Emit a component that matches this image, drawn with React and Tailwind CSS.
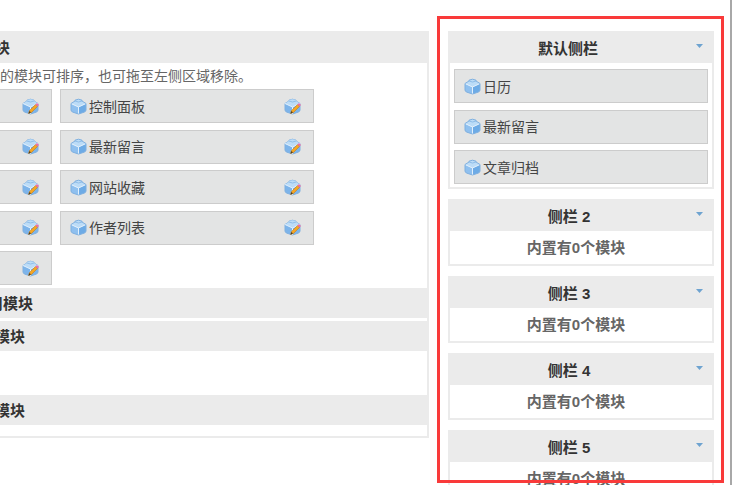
const CubeIcon = () => (
  <svg width="17" height="17" viewBox="0 0 17 17" className="shrink-0">
    <path d="M1 5.500 8.500 9v7L3 14.200Q1 13.500 1 12z" fill="#8fc0ef" />
    <path d="M16 5.500 8.500 9v7l5.500-1.800q2-.7 2-2.200z" fill="#6dabe6" />
    <path d="M1 5.500 5 3V2.200Q8.500.2 12 2.200V3l4 2.500L8.500 9z" fill="#bcdcf7" />
    <path d="M5 3q3.500 2 7 0" fill="none" stroke="#8fbde8" strokeWidth="1" />
    <path d="M1 5.500 8.500 9 16 5.500M8.500 9v7" fill="none" stroke="#e2f0fc" strokeWidth="1" />
    <path d="M1 5.500 5 3V2.200Q8.500.2 12 2.200V3l4 2.500V12q0 1.500-2 2.200L8.500 16 3 14.200Q1 13.500 1 12z" fill="none" stroke="#7fb0e0" strokeWidth="1" />
  </svg>
)

const EditIcon = () => (
  <svg width="18" height="17" viewBox="0 0 18 17" className="shrink-0">
    <path d="M1 5.500 5 3V2.200Q8.500.2 12 2.200V3l4 2.500V12q0 1.500-2 2.200L8.500 16 3 14.200Q1 13.500 1 12z" fill="#7db4ea" stroke="#7fb0e0" strokeWidth="1" />
    <path d="M1 5.500 5 3V2.200Q8.500.2 12 2.200V3l4 2.500L8.500 9z" fill="#bcdcf7" />
    <path d="M5 3q3.500 2 7 0" fill="none" stroke="#8fbde8" strokeWidth="1" />
    <path d="M1 5.500 8.500 9 16 5.500M8.500 9v7" fill="none" stroke="#e2f0fc" strokeWidth="1" />
    <path d="M6.500 15.500 7.500 12.500l6-6 2 2-6 6z" fill="#f5a623" stroke="#b8761a" strokeWidth="0.5" />
    <path d="M13.500 6.500l1.500-1.500 2 2-1.500 1.500z" fill="#ee6fa8" />
    <path d="M6.500 15.500 7.500 13l1.500 1.500z" fill="#4a3a20" />
  </svg>
)

const ModuleItem = ({ name, showEdit }) => (
  <div className="flex h-[34px] items-center border border-[#cccccc] bg-[#e3e4e4] pl-[9px] pr-[11px]">
    <CubeIcon />
    <span className="ml-[2px] flex-1 pt-[2px] text-[14px] text-[#444444]">{name}</span>
    {showEdit && <EditIcon />}
  </div>
)

const LeftHeader = ({ title, className }) => (
  <div className={`flex h-[30px] items-center bg-[#ebebeb] pt-[2px] text-[15px] font-bold text-[#333333] ${className}`}>
    {title}
  </div>
)

const SidebarPanel = ({ title, pad, children }) => (
  <div className="border-x-2 border-b-2 border-[#ebebeb]">
    <div className={`relative -mx-[2px] flex h-[32px] items-center justify-center bg-[#ebebeb] pt-[4px] text-[15px] font-bold text-[#333333] ${pad}`}>
      {title}
      <svg width="7" height="4" viewBox="0 0 7 4" className="absolute right-[11px] top-[13px]">
        <path d="M0 0h7L3.500 4z" fill="#6ea3d0" />
      </svg>
    </div>
    {children}
  </div>
)

const EmptyBody = () => (
  <div className="flex h-[33px] items-center justify-center pr-[10px] pt-[2px] text-[15px] font-bold text-[#666666]">内置有0个模块</div>
)

const gridItems = [
  ['近期文章', '控制面板'],
  ['近期评论', '最新留言'],
  ['标签云', '网站收藏'],
  ['友情链接', '作者列表'],
  ['分类目录'],
]

export default function App() {
  return (
    <div className="relative h-[485px] w-[732px] overflow-hidden bg-white pt-[31px] font-['Liberation_Sans','Noto_Sans_CJK_SC',sans-serif]">
      <div className="flex items-start">
        {/* left area, runs off the screen */}
        <div className="-ml-[208px] w-[637px] shrink-0 border-x-2 border-b-2 border-[#ebebeb] pb-[11px]">
          <div className="-mx-[2px] flex h-[32px] items-center bg-[#ebebeb] pl-[158px] pt-[3px] text-[15px] font-bold text-[#333333]">
            可用模块
          </div>
          <p className="flex h-[26px] items-center pl-[178px] text-[14px] text-[#666666]">
            下方的模块可排序，也可拖至左侧区域移除。
          </p>
          <div className="grid w-[520px] grid-cols-2 gap-x-[8px] gap-y-[6.5px] pl-[4px]">
            {gridItems.map((row) => row.map((name) => <ModuleItem key={name} name={name} showEdit />))}
          </div>
          <LeftHeader title="其他可用模块" className="mt-[3px] pl-[149px]" />
          <LeftHeader title="未用模块" className="mt-[3px] pl-[171px]" />
          <div className="h-[44px]" />
          <LeftHeader title="未用模块" className="pl-[171px]" />
        </div>

        {/* sidebar columns */}
        <div className="ml-[19px] flex w-[266px] shrink-0 flex-col gap-[10px]">
          <SidebarPanel title="默认侧栏" pad="pr-[26px]">
            <div className="flex flex-col gap-[6.5px] px-[4px] pb-[3px] pt-[6px]">
              <ModuleItem name="日历" />
              <ModuleItem name="最新留言" />
              <ModuleItem name="文章归档" />
            </div>
          </SidebarPanel>
          <SidebarPanel title="侧栏 2" pad="pr-[24px]"><EmptyBody /></SidebarPanel>
          <SidebarPanel title="侧栏 3" pad="pr-[24px]"><EmptyBody /></SidebarPanel>
          <SidebarPanel title="侧栏 4" pad="pr-[24px]"><EmptyBody /></SidebarPanel>
          <SidebarPanel title="侧栏 5" pad="pr-[24px]"><EmptyBody /></SidebarPanel>
        </div>
      </div>

      {/* annotation box and window edge */}
      <div className="absolute left-[437px] top-[16px] h-[467px] w-[287px] border-[3px] border-[#f93a3a]" />
      <div className="absolute right-0 top-0 h-full w-[2px] bg-[#a8a8a8]" />
    </div>
  )
}
